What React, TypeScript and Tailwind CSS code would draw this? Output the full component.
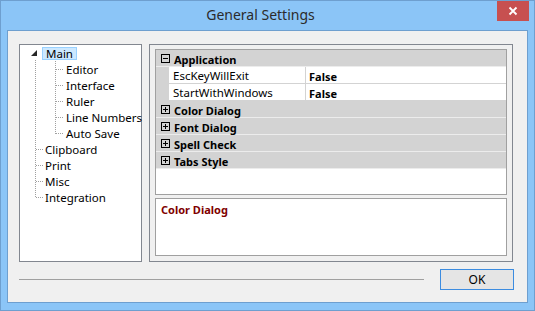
import React from "react";

const font = { fontFamily: '"Noto Sans", "Open Sans", sans-serif' };

function PlusMinus({ minus }: { minus?: boolean }) {
  return (
    <svg width="9" height="9" viewBox="0 0 9 9" className="shrink-0">
      <rect x="0.5" y="0.5" width="8" height="8" fill="none" stroke="#000" />
      <line x1="2" y1="4.5" x2="7" y2="4.5" stroke="#000" />
      {!minus && <line x1="4.5" y1="2" x2="4.5" y2="7" stroke="#000" />}
    </svg>
  );
}

function Category({ label, minus }: { label: string; minus?: boolean }) {
  return (
    <div className="flex h-[17px] items-center bg-[#d3d3d3] border-b border-[#ececec]">
      <div className="flex w-[18px] justify-center pl-[1px] pt-[1px]">
        <PlusMinus minus={minus} />
      </div>
      <span className="text-[11px] font-bold text-black leading-none pt-[2px] whitespace-nowrap">{label}</span>
    </div>
  );
}

function Prop({ name, value }: { name: string; value: string }) {
  return (
    <div className="flex h-[17px] bg-[#d3d3d3]">
      <div className="w-[13px] shrink-0" />
      <div className="flex flex-1 bg-white border-b border-[#d3d3d3]">
        <div className="w-[137px] pl-[4px] pt-[2px] flex items-center border-r border-[#d3d3d3] text-[11.5px] leading-none text-black whitespace-nowrap">
          {name}
        </div>
        <div className="flex-1 pl-[3px] pt-[2px] flex items-center text-[11px] font-bold leading-none text-black">
          {value}
        </div>
      </div>
    </div>
  );
}

const treeItems: { label: string; child?: boolean; selected?: boolean }[] = [
  { label: "Main", selected: true },
  { label: "Editor", child: true },
  { label: "Interface", child: true },
  { label: "Ruler", child: true },
  { label: "Line Numbers", child: true },
  { label: "Auto Save", child: true },
  { label: "Clipboard" },
  { label: "Print" },
  { label: "Misc" },
  { label: "Integration" },
];

function Tree() {
  return (
    <div className="relative w-[123px] h-[218px] shrink-0 border border-[#828790] bg-white">
      <svg className="absolute left-0 top-0" width="121" height="216">
        <g stroke="#a0a0a0" strokeDasharray="1 1" shapeRendering="crispEdges">
          <line x1="15.5" y1="15" x2="15.5" y2="153" />
          {[6, 7, 8, 9].map((i) => (
            <line key={i} x1="16" y1={8.5 + 16 * i} x2="24" y2={8.5 + 16 * i} />
          ))}
          <line x1="35.5" y1="16" x2="35.5" y2="89" />
          {[1, 2, 3, 4, 5].map((i) => (
            <line key={i} x1="36" y1={8.5 + 16 * i} x2="44" y2={8.5 + 16 * i} />
          ))}
        </g>
        <polygon points="17,5 17,11 11,11" fill="#262626" />
      </svg>
      <div className="relative flex flex-col">
        {treeItems.map((it) => (
          <div
            key={it.label}
            className={`flex h-[16px] items-center whitespace-nowrap ${it.child ? "pl-[43px]" : "pl-[22px]"}`}
          >
            <span
              className={`text-[11.5px] leading-none text-black whitespace-nowrap ${
                it.selected
                  ? "bg-[#cce8ff] border border-[#99d1ff] px-[3px] h-[13px] flex items-center pt-[1px]"
                  : "px-[3px] pt-[1px]"
              }`}
            >
              {it.label}
            </span>
          </div>
        ))}
      </div>
    </div>
  );
}

export default function App() {
  return (
    <div
      className="w-[535px] h-[311px] flex flex-col bg-[#8bc5f7] border border-[#6e9fcf]"
      style={font}
    >
      <div className="relative h-[29px] shrink-0 flex items-center justify-center pr-[14px]">
        <span className="text-[14px] text-[#2b2b2b] leading-none pb-[1px]">General Settings</span>
        <div className="absolute right-[5px] top-0 w-[32px] h-[20px] bg-[#c75050] flex items-center justify-center">
          <svg width="10" height="10" viewBox="0 0 10 10">
            <path d="M1.5 1.5 L8.5 8.5 M8.5 1.5 L1.5 8.5" stroke="#fff" strokeWidth="1.8" />
          </svg>
        </div>
      </div>
      <div className="mx-[6px] h-[273px] border border-[#6e9fcf] bg-[#f0f0f0] flex flex-col">
        <div className="flex pt-[13px] pl-[11px] gap-[7px]">
          <Tree />
          <div className="w-[364px] h-[218px] border border-[#828790] px-[5px] pt-[4px] pb-[5px] flex flex-col gap-[3px]">
            <div className="h-[146px] shrink-0 border border-[#a0a0a0] bg-white flex flex-col">
              <Category label="Application" minus />
              <Prop name="EscKeyWillExit" value="False" />
              <Prop name="StartWithWindows" value="False" />
              <Category label="Color Dialog" />
              <Category label="Font Dialog" />
              <Category label="Spell Check" />
              <Category label="Tabs Style" />
            </div>
            <div className="flex-1 border border-[#a0a0a0] bg-white px-[5px] pt-[5px]">
              <div className="text-[11px] font-bold text-[#800000] leading-none">Color Dialog</div>
            </div>
          </div>
        </div>
        <div className="flex items-center pl-[11px] mt-[7px] gap-[16px]">
          <div className="w-[405px] h-[1px] bg-[#a0a0a0]" />
          <div className="w-[74px] h-[21px] border border-[#3c8ce0] bg-[#e5e5e5] flex items-center justify-center text-[12px] text-black">
            OK
          </div>
        </div>
      </div>
    </div>
  );
}
